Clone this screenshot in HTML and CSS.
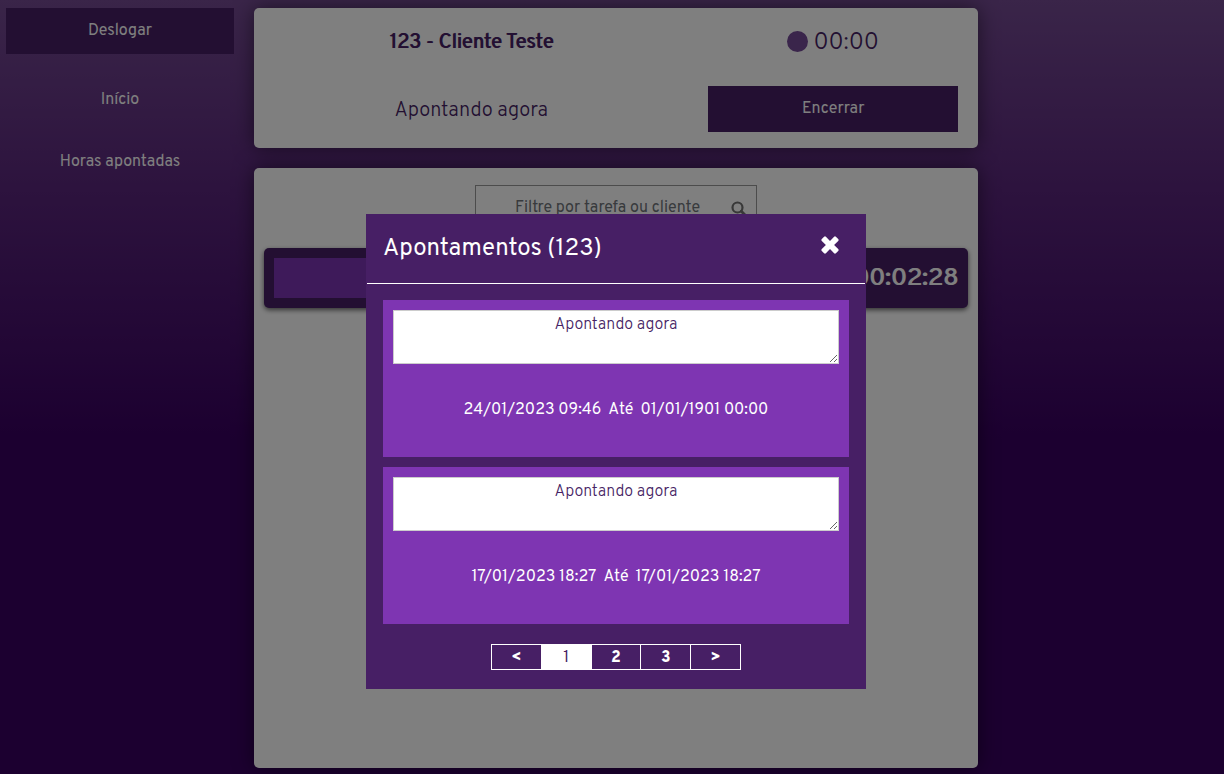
FILE: index.html
```html
<!DOCTYPE html>
<html lang="pt-BR">
<head>
<meta charset="utf-8">
<meta name="viewport" content="width=device-width, initial-scale=1">
<title>Apontamentos</title>
<link rel="stylesheet" href="styles.css">
</head>
<body>
<div class="page">
  <nav class="sidebar">
    <button class="btn" type="button">Deslogar</button>
    <a class="nav-link" href="#inicio">Início</a>
    <a class="nav-link" href="#horas">Horas apontadas</a>
  </nav>
  <main class="main">
    <section class="panel current">
      <h1 class="current-title">123 - Cliente Teste</h1>
      <div class="timer"><span class="dot"></span><span class="timer-value">00:00</span></div>
      <p class="current-note">Apontando agora</p>
      <button class="btn" type="button">Encerrar</button>
    </section>
    <section class="panel tasks">
      <div class="search">
        <input class="search-input" type="text" placeholder="Filtre por tarefa ou cliente" aria-label="Filtre por tarefa ou cliente">
        <svg class="search-icon" viewBox="0 0 16 16" aria-hidden="true"><circle cx="6.5" cy="6.5" r="5" fill="none" stroke="currentColor" stroke-width="2.2"/><path d="M10.3 10.3 14 14" stroke="currentColor" stroke-width="2.8" stroke-linecap="round"/></svg>
      </div>
      <div class="task">
        <div class="task-name"></div>
        <span class="task-time">00:02:28</span>
      </div>
    </section>
  </main>
</div>
<div class="overlay">
  <div class="modal" role="dialog" aria-modal="true" aria-labelledby="modal-title">
    <header class="modal-head">
      <h2 class="modal-title" id="modal-title">Apontamentos (123)</h2>
      <button class="close" type="button" aria-label="Fechar">
        <svg class="close-icon" viewBox="0 0 18 18" aria-hidden="true"><path d="M4.9.8 9 4.9 13.1.8Q14-.1 14.9.8L17.2 3.1Q18.1 4 17.2 4.9L13.1 9 17.2 13.1Q18.1 14 17.2 14.9L14.9 17.2Q14 18.1 13.1 17.2L9 13.1 4.9 17.2Q4 18.1 3.1 17.2L.8 14.9Q-.1 14 .8 13.1L4.9 9 .8 4.9Q-.1 4 .8 3.1L3.1.8Q4-.1 4.9.8Z" fill="currentColor"/></svg>
      </button>
    </header>
    <div class="modal-body">
      <article class="entry">
        <textarea class="note" aria-label="Descrição">Apontando agora</textarea>
        <p class="dates"><span>24/01/2023 09:46</span><span>Até</span><span>01/01/1901 00:00</span></p>
      </article>
      <article class="entry">
        <textarea class="note" aria-label="Descrição">Apontando agora</textarea>
        <p class="dates"><span>17/01/2023 18:27</span><span>Até</span><span>17/01/2023 18:27</span></p>
      </article>
    </div>
    <div class="pager">
      <button class="page-btn" type="button">&lt;</button>
      <button class="page-btn active" type="button">1</button>
      <button class="page-btn" type="button">2</button>
      <button class="page-btn" type="button">3</button>
      <button class="page-btn" type="button">&gt;</button>
    </div>
  </div>
</div>
</body>
</html>
```
FILE: styles.css
```css
* { box-sizing: border-box; }
body {
  margin: 0;
  min-height: 100vh;
  font-family: Overpass, Roboto, sans-serif;
  font-size: 16px;
  color: #471f65;
  background: #380060 linear-gradient(#744a92, #5a267c 190px, #380060 440px) no-repeat;
}
h1, h2, p { margin: 0; font-weight: 400; }
button, input, textarea { font: inherit; }
.page {
  display: grid;
  grid-template-columns: 240px minmax(0, 1fr) 240px;
  min-height: 100vh;
}
.sidebar {
  display: flex;
  flex-direction: column;
  gap: 16px;
  padding: 8px 6px;
}
.btn {
  height: 46px;
  padding: 0;
  border: 0;
  color: #fff;
  background: #471f65;
  cursor: pointer;
}
.nav-link {
  height: 46px;
  line-height: 60px;
  text-align: center;
  color: #fff;
  text-decoration: none;
}
.main {
  display: flex;
  flex-direction: column;
  gap: 20px;
  padding: 8px 6px 6px 14px;
}
.panel {
  border-radius: 5px;
  background: #fff;
  box-shadow: 0 0 20px rgba(0, 0, 0, .5);
}
.current {
  display: grid;
  grid-template-columns: 3fr 2fr;
  grid-template-rows: 66px 46px;
  row-gap: 12px;
  align-items: center;
  padding-bottom: 16px;
  text-align: center;
}
.current .btn { margin: 0 20px; }
.current-title, .current-note, .timer-value { padding-top: 4px; }
.current-title { font-size: 20px; text-shadow: 1px 0 currentColor; }
.current-note { font-size: 20px; font-weight: 300; }
.timer {
  display: flex;
  justify-content: center;
  align-items: center;
  gap: 5px;
  font-size: 24px;
  font-weight: 300;
}
.dot { width: 21px; height: 21px; border-radius: 50%; background: #744a96; }
.tasks { flex: 1; padding: 17px 10px; }
.search {
  display: flex;
  align-items: center;
  width: 282px;
  height: 43px;
  margin: 0 auto;
  border: 1px solid #999;
  color: #707070;
}
.search-input {
  flex: 1;
  min-width: 0;
  padding: 3px 8px 0 16px;
  border: 0;
  text-align: center;
  background: none;
}
.search-input::placeholder { color: #70757a; opacity: 1; }
.search-icon { width: 16px; height: 16px; margin: 4px 9px 0 0; }
.task {
  display: flex;
  justify-content: space-between;
  gap: 10px;
  height: 60px;
  margin-top: 20px;
  padding: 10px;
  border-radius: 5px;
  color: #fff;
  background: #471f65;
  box-shadow: 0 2px 5px rgba(0, 0, 0, .6);
}
.task-name { width: 60%; background: #7c35b4; }
.task-time { font-size: 25px; line-height: 42px; text-shadow: 1px 0 currentColor; }
.overlay {
  position: fixed;
  inset: 0;
  display: flex;
  justify-content: center;
  align-items: flex-start;
  padding: 214px 0 0 8px;
  background: rgba(0, 0, 0, .5);
}
.modal {
  width: 500px;
  padding: 1px 1px 19px;
  color: #fff;
  background: #471f65;
}
.modal-head {
  display: flex;
  justify-content: space-between;
  align-items: center;
  padding: 18px 26px 18px 16px;
  border-bottom: 1px solid #fff;
}
.modal-title { font-size: 24px; line-height: 32px; }
.close { padding: 0; border: 0; color: #fff; background: none; cursor: pointer; }
.close-icon { display: block; width: 18px; height: 18px; margin-bottom: 8px; }
.modal-body { display: grid; gap: 10px; padding: 16px; }
.entry { padding: 10px; background: #7e35b2; }
.note {
  display: block;
  width: 100%;
  height: 54px;
  padding: 2px;
  border: 1px solid #ccc;
  text-align: center;
  line-height: 24px;
  font-weight: 300;
  color: #471f65;
  background: #fff;
}
.dates {
  display: flex;
  justify-content: center;
  align-items: center;
  gap: 7px;
  height: 83px;
  padding-top: 9px;
}
.pager {
  display: flex;
  width: 250px;
  margin: 4px auto 0;
}
.page-btn {
  flex: 1 1 0;
  height: 26px;
  padding: 0;
  border: 1px solid #fff;
  border-left-width: 0;
  font-weight: 800;
  line-height: 26px;
  color: #fff;
  background: none;
  cursor: pointer;
}
.page-btn:first-child { border-left-width: 1px; }
.page-btn.active { font-weight: 400; color: #471f65; background: #fff; }
```
